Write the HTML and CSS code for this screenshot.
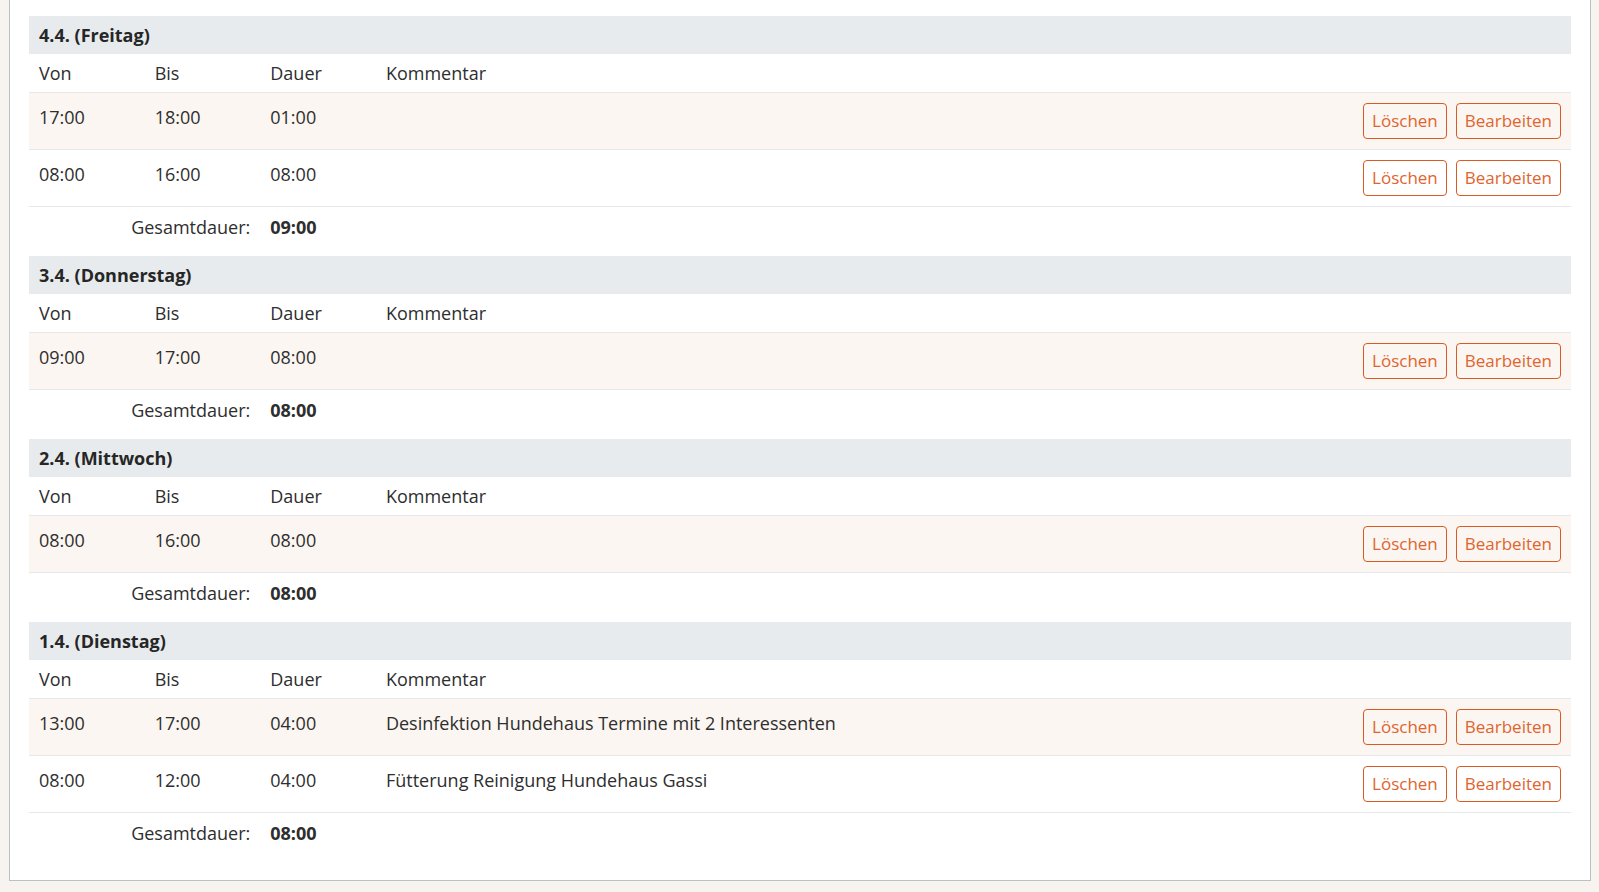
FILE: index.html
```html
<!DOCTYPE html>
<html lang="de">
<head>
<meta charset="utf-8">
<title>Zeiten</title>
<link rel="stylesheet" href="styles.css">
</head>
<body>
<div class="card">

  <section class="day">
    <div class="day-title">4.4. (Freitag)</div>
    <div class="row head"><span>Von</span><span>Bis</span><span>Dauer</span><span>Kommentar</span><span></span></div>
    <div class="row entry odd"><span>17:00</span><span>18:00</span><span>01:00</span><span></span><span class="actions"><button class="btn">Löschen</button><button class="btn">Bearbeiten</button></span></div>
    <div class="row entry"><span>08:00</span><span>16:00</span><span>08:00</span><span></span><span class="actions"><button class="btn">Löschen</button><button class="btn">Bearbeiten</button></span></div>
    <div class="row total"><span class="total-label">Gesamtdauer:</span><span class="total-value">09:00</span></div>
  </section>

  <section class="day">
    <div class="day-title">3.4. (Donnerstag)</div>
    <div class="row head"><span>Von</span><span>Bis</span><span>Dauer</span><span>Kommentar</span><span></span></div>
    <div class="row entry odd"><span>09:00</span><span>17:00</span><span>08:00</span><span></span><span class="actions"><button class="btn">Löschen</button><button class="btn">Bearbeiten</button></span></div>
    <div class="row total"><span class="total-label">Gesamtdauer:</span><span class="total-value">08:00</span></div>
  </section>

  <section class="day">
    <div class="day-title">2.4. (Mittwoch)</div>
    <div class="row head"><span>Von</span><span>Bis</span><span>Dauer</span><span>Kommentar</span><span></span></div>
    <div class="row entry odd"><span>08:00</span><span>16:00</span><span>08:00</span><span></span><span class="actions"><button class="btn">Löschen</button><button class="btn">Bearbeiten</button></span></div>
    <div class="row total"><span class="total-label">Gesamtdauer:</span><span class="total-value">08:00</span></div>
  </section>

  <section class="day">
    <div class="day-title">1.4. (Dienstag)</div>
    <div class="row head"><span>Von</span><span>Bis</span><span>Dauer</span><span>Kommentar</span><span></span></div>
    <div class="row entry odd"><span>13:00</span><span>17:00</span><span>04:00</span><span>Desinfektion Hundehaus Termine mit 2 Interessenten</span><span class="actions"><button class="btn">Löschen</button><button class="btn">Bearbeiten</button></span></div>
    <div class="row entry"><span>08:00</span><span>12:00</span><span>04:00</span><span>Fütterung Reinigung Hundehaus Gassi</span><span class="actions"><button class="btn">Löschen</button><button class="btn">Bearbeiten</button></span></div>
    <div class="row total"><span class="total-label">Gesamtdauer:</span><span class="total-value">08:00</span></div>
  </section>

</div>
</body>
</html>
```
FILE: styles.css
```css
html, body {
  background: #f7f3ee;
}
body {
  margin: 0 8px 0 9px;
  font-family: "Open Sans", "Noto Sans", sans-serif;
  font-size: 18px;
  color: #2e2e2e;
}
.card {
  background: #ffffff;
  border: 1px solid #b9c0c8;
  border-top: none;
  box-shadow: 0 0 6px rgba(120, 100, 80, 0.12);
  padding: 16px 19px 18px 19px;
}
.day-title {
  background: #e8ebee;
  height: 38px;
  line-height: 39px;
  padding-left: 10px;
  font-weight: 700;
  font-size: 18px;
  color: #262626;
}
.row {
  display: grid;
  grid-template-columns: 7.5% 7.5% 7.5% 1fr auto;
  line-height: 27px;
}
.row > span {
  padding: 0 10px;
}
.head {
  height: 38px;
  align-items: center;
  border-bottom: 1px solid #e6e8eb;
}
.entry {
  height: 56px;
  border-bottom: 1px solid #e6e8eb;
  align-items: start;
}
.entry > span {
  padding-top: 11px;
}
.entry.odd {
  background: #fbf6f1;
}
.entry > .actions {
  padding-top: 10px;
  display: flex;
  gap: 9px;
}
.btn {
  font-family: inherit;
  font-size: 17px;
  color: #e0642d;
  background: transparent;
  border: 1px solid #d95b21;
  border-radius: 4px;
  height: 36px;
  padding: 0 8px;
  line-height: 34px;
  cursor: pointer;
}
.total {
  height: 49px;
  align-items: start;
}
.total > span {
  padding-top: 7px;
}
.total-label {
  grid-column: 1 / span 2;
  text-align: right;
  padding-right: 12px;
}
.total-value {
  grid-column: 3;
  font-weight: 700;
}
```
